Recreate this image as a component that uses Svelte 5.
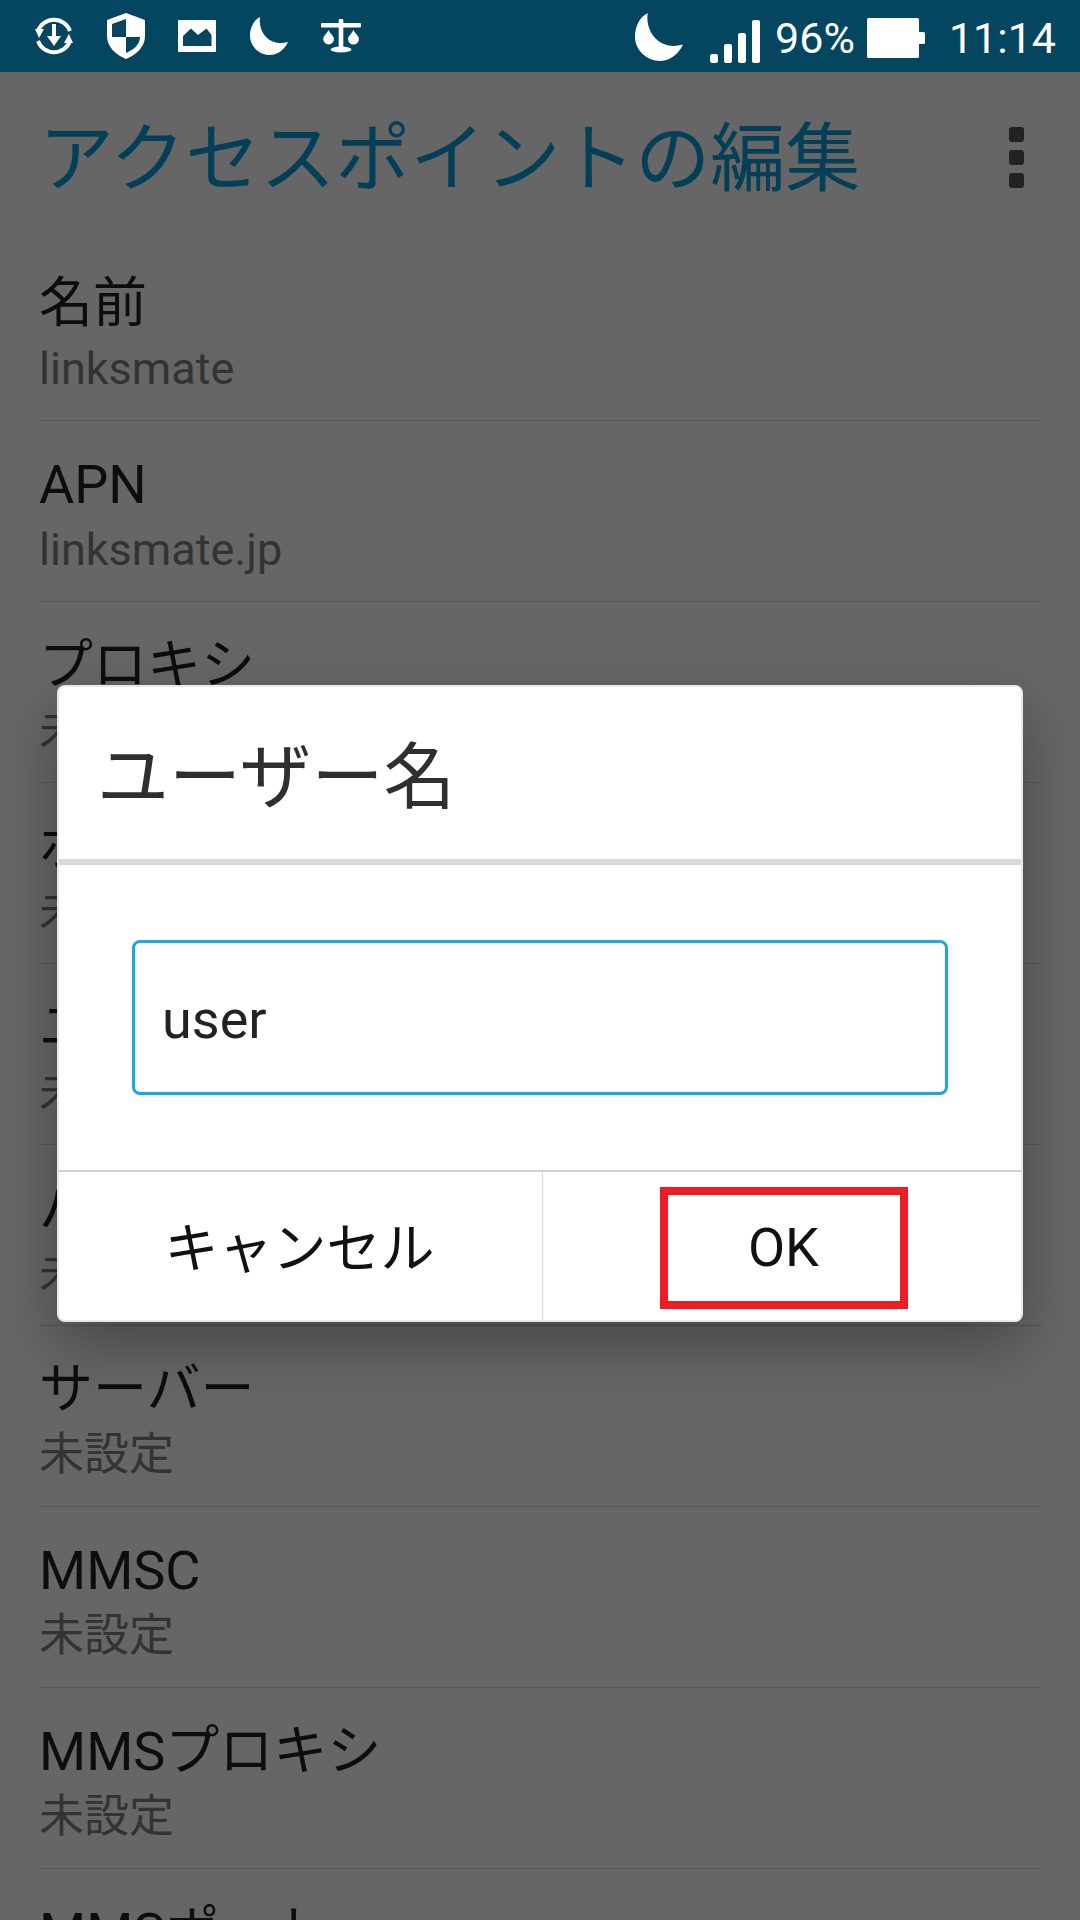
<script>
	const rows = [
		['名前', 'linksmate'],
		['APN', 'linksmate.jp'],
		['プロキシ', '未設定'],
		['ポート', '未設定'],
		['ユーザー名', '未設定'],
		['パスワード', '未設定'],
		['サーバー', '未設定'],
		['MMSC', '未設定'],
		['MMSプロキシ', '未設定'],
		['MMSポート', '未設定']
	];

	const moon = 'M10 0C8 16 20 30 38 25C34 34 26 38 20 38C9 38 0 29 0 19C0 10 4 3 10 0Z';
</script>

<div class="screen">
	<header class="status">
		<div class="left-icons">
			<svg width="38" height="38" viewBox="0 0 38 38" fill="none" stroke="#fff" stroke-width="4">
				<path d="M3 14A17 17 0 0 1 35 14" />
				<path d="M35 24A17 17 0 0 1 3 24" />
				<path d="M0 12l9 0-5 9zM38 26l-9 0 5-9z" fill="#fff" stroke="none" />
				<path d="M19 7v14" />
				<path d="M12 19h14l-7 10z" fill="#fff" stroke="none" />
			</svg>
			<svg width="38" height="46" viewBox="0 0 38 46">
				<path fill-rule="evenodd" fill="#fff" d="M19 0L38 7V23C38 34 29 42 19 46C9 42 0 34 0 23V7ZM19 6L5 11V24H19ZM19 24V40C26 37 33 32 33 24Z" />
			</svg>
			<svg width="38" height="32" viewBox="0 0 38 32">
				<path fill-rule="evenodd" fill="#fff" d="M1 0H37Q38 0 38 1V31Q38 32 37 32H1Q0 32 0 31V1Q0 0 1 0ZM5 26H33.500V15L28.500 8.500L20 15L13 8.500L5 16Z" />
			</svg>
			<svg width="38" height="38" viewBox="0 0 38 38">
				<path fill="#fff" d={moon} />
			</svg>
			<svg width="40" height="34" viewBox="0 0 40 34" fill="#fff">
				<rect x="0" y="4" width="40" height="4.500" rx="1" />
				<rect x="17.700" y="0" width="4.600" height="30" rx="1" />
				<ellipse cx="20" cy="30.500" rx="10.500" ry="3" />
				<path d="M7.600 11C9 14.500 13 17 13 20A5.400 5.400 0 0 1 2.200 20C2.200 17 6 14.500 7.600 11Z" />
				<path d="M32.400 11C34 14.500 38 17 38 20A5.400 5.400 0 0 1 27 20C27 17 31 14.500 32.400 11Z" />
			</svg>
		</div>
		<div class="right-icons">
			<svg class="moon-big" width="48" height="48" viewBox="0 0 38 38">
				<path fill="#fff" d={moon} />
			</svg>
			<svg class="signal" width="50" height="43" viewBox="0 0 50 43" fill="#fff">
				<rect x="0" y="34" width="8" height="9" rx="2" />
				<rect x="14" y="24" width="8" height="19" rx="2" />
				<rect x="28" y="13" width="8" height="30" rx="2" />
				<rect x="42" y="0" width="8" height="43" rx="2" />
			</svg>
			<span class="pct">96%</span>
			<svg class="battery" width="58" height="40" viewBox="0 0 58 40" fill="#fff">
				<rect x="0" y="0" width="52" height="40" rx="1.500" />
				<rect x="51" y="14" width="7" height="12" rx="1.500" />
			</svg>
			<span class="time">11:14</span>
		</div>
	</header>

	<div class="titlebar">
		<h1>アクセスポイントの編集</h1>
		<div class="overflow"><i></i><i></i><i></i></div>
	</div>

	<ul class="list">
		{#each rows as [label, value]}
			<li>
				<span class="label">{label}</span>
				<span class="value">{value}</span>
			</li>
		{/each}
	</ul>

	<div class="dialog">
		<div class="dialog-title">ユーザー名</div>
		<div class="dialog-body">
			<div class="field">user</div>
		</div>
		<div class="dialog-actions">
			<div class="action cancel">キャンセル</div>
			<div class="action"><span class="ok">OK</span></div>
		</div>
	</div>
</div>

<style>
	:global(body) {
		background: #666;
	}

	.screen {
		position: relative;
		width: 1080px;
		height: 1920px;
		overflow: hidden;
		background: #666;
		font-family: Roboto, 'Noto Sans CJK JP', sans-serif;
	}

	.status {
		height: 72px;
		background: #04465f;
		display: flex;
		justify-content: space-between;
		align-items: center;
		color: #fff;
	}

	.left-icons {
		display: flex;
		align-items: center;
		gap: 33.5px;
		padding-left: 35px;
	}

	.right-icons {
		display: flex;
		align-items: center;
		padding-right: 24px;
		font-size: 43px;
		line-height: 48px;
	}

	.moon-big {
		margin-right: 27px;
		margin-top: 2px;
	}

	.signal {
		margin-right: 15px;
		margin-top: 11px;
	}

	.pct {
		margin-right: 12px;
		margin-top: 4px;
	}

	.battery {
		margin-right: 24px;
		margin-top: 4px;
	}

	.time {
		margin-top: 4px;
	}

	.titlebar {
		height: 168px;
		display: flex;
		justify-content: space-between;
		align-items: center;
		padding: 6px 56px 0 39px;
		box-sizing: border-box;
	}

	h1 {
		margin: 0;
		font-size: 75px;
		font-weight: 400;
		color: #033f56;
		line-height: 100px;
	}

	.overflow {
		display: flex;
		flex-direction: column;
		gap: 8px;
		margin-bottom: 3px;
	}

	.overflow i {
		display: block;
		width: 15px;
		height: 15px;
		border-radius: 3px;
		background: #222;
	}

	.list {
		list-style: none;
		margin: 0;
		padding: 0 39px 0 40px;
	}

	li {
		height: 181px;
		box-sizing: border-box;
		border-bottom: 1px solid #565656;
		display: flex;
		flex-direction: column;
		padding-top: 30px;
	}

	.label {
		font-size: 54px;
		line-height: 68px;
		color: #0d0d0d;
		margin-left: -1px;
	}

	.value {
		font-size: 45px;
		line-height: 62px;
		color: #333;
		margin-left: -1px;
	}

	.dialog {
		position: absolute;
		left: 57px;
		top: 685px;
		width: 966px;
		height: 637px;
		box-sizing: border-box;
		background: #fff;
		border: 2px solid #e8e8e8;
		border-radius: 8px;
		box-shadow: 0 24px 60px rgba(0, 0, 0, 0.3);
		display: flex;
		flex-direction: column;
	}

	.dialog-title {
		height: 178px;
		box-sizing: border-box;
		border-bottom: 6px solid #d8d8d8;
		padding: 0 0 6px 38px;
		display: flex;
		align-items: center;
		font-size: 72px;
		color: #2f2f2f;
	}

	.dialog-body {
		height: 307px;
		box-sizing: border-box;
		border-bottom: 2px solid #d0d0d0;
		padding: 75px 73px 0 73px;
	}

	.field {
		height: 155px;
		box-sizing: border-box;
		border: 3px solid #1ea7dc;
		border-radius: 8px;
		display: flex;
		align-items: center;
		padding: 4px 0 0 27px;
		font-size: 54px;
		color: #222;
	}

	.dialog-actions {
		flex: 1;
		display: grid;
		grid-template-columns: 484px 1fr;
	}

	.action {
		display: flex;
		align-items: center;
		justify-content: center;
		font-size: 54px;
		color: #111;
	}

	.cancel {
		border-right: 1px solid #d8d8d8;
		padding: 0 2px 4px 0;
	}

	.ok {
		width: 248px;
		height: 122px;
		box-sizing: border-box;
		border: 8px solid #ee1c25;
		display: flex;
		align-items: center;
		justify-content: center;
		margin-left: 3px;
		margin-top: 3px;
	}
</style>
